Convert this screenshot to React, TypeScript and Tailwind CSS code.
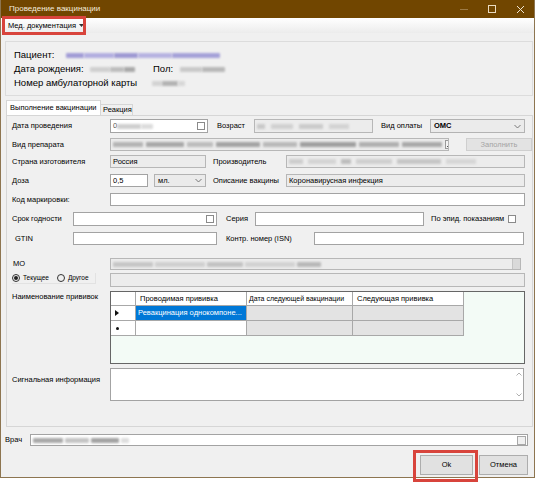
import React from "react";

const font = { fontFamily: '"Liberation Sans", Arial, "Noto Sans", sans-serif' };

const Chevron = () => (
  <svg width="7" height="5" viewBox="0 0 7 5" className="shrink-0">
    <polyline points="0.5,1 3.5,4 6.5,1" fill="none" stroke="#6b6b6b" strokeWidth="0.9" />
  </svg>
);

const Smudge = ({ className }: { className: string }) => (
  <div className={`h-[5px] rounded-[1px] blur-[1px] shrink-0 ${className}`} />
);

type BoxProps = {
  className: string;
  gray?: boolean;
  children?: React.ReactNode;
};

// текстовое поле WinForms
const Field = ({ className, gray, children }: BoxProps) => (
  <div
    className={`h-full border flex items-center px-[2px] overflow-hidden shrink-0 text-[7.5px] leading-none whitespace-nowrap ${
      gray ? "bg-[#ececec] border-[#b7b7b7]" : "bg-white border-[#a3a3a3]"
    } ${className}`}
  >
    {children}
  </div>
);

const Select = ({ className, children }: BoxProps) => (
  <div
    className={`h-full border border-[#b3b3b3] bg-[#ebebeb] flex items-center justify-between px-[3px] shrink-0 text-[7.5px] leading-none ${className}`}
  >
    <span>{children}</span>
    <Chevron />
  </div>
);

const Check = () => <div className="w-[8px] h-[8px] border border-[#8a8a8a] bg-white shrink-0" />;

const Dots = () => (
  <div className="ml-auto w-[9px] h-[9px] border border-[#9a9a9a] bg-[#f4f4f4] flex items-end justify-center gap-[1px] pb-[1px] shrink-0">
    <div className="w-[1px] h-[1px] bg-[#555]" />
    <div className="w-[1px] h-[1px] bg-[#555]" />
    <div className="w-[1px] h-[1px] bg-[#555]" />
  </div>
);

const Label = ({ className, children }: { className: string; children: React.ReactNode }) => (
  <div className={`shrink-0 text-[7.5px] leading-none whitespace-nowrap ${className}`}>{children}</div>
);

const App: React.FC = () => {
  return (
    <div className="relative w-[536px] h-[482px] bg-white overflow-hidden text-black" style={font}>
      <div className="w-[535px] h-[478px] border-x border-b border-[#8d7550] bg-[#f0f0f0] flex flex-col">
        {/* заголовок окна */}
        <div className="h-[18px] bg-[#714600] flex items-center pl-[8px] shrink-0">
          <span className="text-[8px] text-[#f4ecdd]">Проведение вакцинации</span>
          <div className="ml-auto flex h-full">
            <div className="w-[28px] h-full flex items-center justify-center">
              <div className="w-[8px] h-[1px] bg-[#9c7a45]" />
            </div>
            <div className="w-[28px] h-full flex items-center justify-center">
              <div className="w-[8px] h-[8px] border border-[#eadbc0]" />
            </div>
            <div className="w-[28px] h-full flex items-center justify-center">
              <svg width="9" height="9" viewBox="0 0 9 9">
                <path d="M1 1 L8 8 M8 1 L1 8" stroke="#f1e6d2" strokeWidth="1" />
              </svg>
            </div>
          </div>
        </div>

        {/* меню */}
        <div className="h-[15px] bg-linear-to-b from-white to-[#ececec] flex items-center pl-[7px] shrink-0">
          <span className="text-[7.5px]">Мед. документация</span>
          <svg width="5" height="3" viewBox="0 0 5 3" className="ml-[3px]">
            <polygon points="0,0 5,0 2.5,3" fill="#333" />
          </svg>
        </div>

        {/* пациент */}
        <div className="mt-[8px] ml-[4px] w-[528px] h-[55px] border border-[#dcdcdc] pl-[8px] pt-[6px] flex flex-col text-[9.5px] leading-none shrink-0">
          <div className="h-[14px] flex items-center">
            <span className="w-[52px] shrink-0">Пациент:</span>
            <div className="flex">
              <Smudge className="w-[18px] bg-[#a19cd6]" />
              <Smudge className="w-[30px] bg-[#b2aee0]" />
              <Smudge className="w-[24px] bg-[#9e99d3]" />
              <Smudge className="w-[34px] bg-[#b6b2e1]" />
              <Smudge className="w-[48px] bg-[#a5a1d8]" />
            </div>
          </div>
          <div className="h-[14px] flex items-center">
            <span className="w-[76px] shrink-0">Дата рождения:</span>
            <div className="flex w-[45px]">
              <Smudge className="w-[20px] bg-[#cfcfcf]" />
              <Smudge className="w-[14px] bg-[#bdbdbd]" />
              <Smudge className="w-[11px] bg-[#a9a9a9]" />
            </div>
            <span className="ml-[18px] w-[27px] shrink-0">Пол:</span>
            <div className="flex w-[45px]">
              <Smudge className="w-[22px] bg-[#c9c9c9]" />
              <Smudge className="w-[23px] bg-[#b8b8b8]" />
            </div>
          </div>
          <div className="h-[14px] flex items-center">
            <span className="w-[138px] shrink-0">Номер амбулаторной карты</span>
            <div className="flex">
              <Smudge className="w-[10px] bg-[#d3d3d3]" />
              <Smudge className="w-[16px] bg-[#b3b3b3]" />
              <Smudge className="w-[7px] bg-[#d7d7d7]" />
            </div>
          </div>
        </div>

        {/* вкладки */}
        <div className="mt-[4px] h-[15px] flex items-end pl-[5px] shrink-0">
          <div className="w-[95px] h-[15px] bg-white border border-b-0 border-[#d6d6d6] flex items-center pl-[3px] text-[7.5px] leading-none whitespace-nowrap">
            Выполнение вакцинации
          </div>
          <div className="w-[32px] h-[11px] bg-[#f0f0f0] border border-l-0 border-b-0 border-[#d6d6d6] flex items-center pl-[2px] text-[7.5px] leading-none">
            Реакция
          </div>
        </div>

        {/* панель вкладки */}
        <div className="ml-[5px] w-[527px] h-[312px] border border-[#d6d6d6] bg-[#f0f0f0] flex flex-col pl-[5px] shrink-0">
          {/* дата / возраст / оплата */}
          <div className="mt-[3px] h-[14px] flex items-center">
            <Label className="w-[98px]">Дата проведения</Label>
            <Field className="w-[98px] justify-between">
              <div className="flex items-center">
                <span className="text-[#555]">0</span>
                <Smudge className="w-[24px] bg-[#cfcfcf]" />
                <Smudge className="w-[12px] bg-[#dcdcdc]" />
              </div>
              <Check />
            </Field>
            <Label className="ml-[9px] w-[37px]">Возраст</Label>
            <Field gray className="w-[119px] gap-[6px]">
              <Smudge className="w-[8px] bg-[#c9c9c9]" />
              <Smudge className="w-[22px] bg-[#d0d0d0]" />
              <Smudge className="w-[24px] bg-[#cbcbcb]" />
              <Smudge className="w-[20px] bg-[#d3d3d3]" />
            </Field>
            <Label className="ml-[8px] w-[49px]">Вид оплаты</Label>
            <Select className="w-[95px] font-semibold">ОМС</Select>
          </div>

          {/* вид препарата */}
          <div className="mt-[5px] h-[13px] flex items-center">
            <Label className="w-[98px]">Вид препарата</Label>
            <Field gray className="w-[339px] gap-[3px] pr-0">
              <Smudge className="w-[30px] bg-[#b4b4b4]" />
              <Smudge className="w-[38px] bg-[#a8a8a8]" />
              <Smudge className="w-[26px] bg-[#bdbdbd]" />
              <Smudge className="w-[44px] bg-[#a4a4a4]" />
              <Smudge className="w-[34px] bg-[#b9b9b9]" />
              <Smudge className="w-[56px] bg-[#9f9f9f]" />
              <Smudge className="w-[40px] bg-[#b0b0b0]" />
              <Smudge className="w-[40px] bg-[#a9a9a9]" />
              <Dots />
            </Field>
            <div className="ml-[17px] w-[69px] h-full bg-[#e3e3e3] border border-[#cfcfcf] flex items-center justify-center text-[7.5px] leading-none text-[#a3a3a3]">
              Заполнить
            </div>
          </div>

          {/* страна / производитель */}
          <div className="mt-[4px] h-[13px] flex items-center">
            <Label className="w-[98px]">Страна изготовителя</Label>
            <Field gray className="w-[96px]">Россия</Field>
            <Label className="ml-[7px] w-[73px]">Производитель</Label>
            <Field gray className="w-[239px] gap-[5px]">
              <Smudge className="w-[14px] bg-[#cdcdcd]" />
              <Smudge className="w-[28px] bg-[#d4d4d4]" />
              <Smudge className="w-[10px] bg-[#bdbdbd]" />
              <Smudge className="w-[36px] bg-[#cfcfcf]" />
              <Smudge className="w-[44px] bg-[#c6c6c6]" />
              <Smudge className="w-[30px] bg-[#d6d6d6]" />
            </Field>
          </div>

          {/* доза / описание */}
          <div className="mt-[6px] h-[13px] flex items-center">
            <Label className="w-[98px]">Доза</Label>
            <Field className="w-[38px]">0,5</Field>
            <Select className="ml-[6px] w-[52px]">мл.</Select>
            <Label className="ml-[7px] w-[73px]">Описание вакцины</Label>
            <Field gray className="w-[239px]">Коронавирусная инфекция</Field>
          </div>

          {/* код маркировки */}
          <div className="mt-[6px] h-[13px] flex items-center">
            <Label className="w-[98px]">Код маркировки:</Label>
            <Field className="w-[415px]" />
          </div>

          {/* срок годности / серия */}
          <div className="mt-[6px] h-[14px] flex items-center">
            <Label className="w-[61px]">Срок годности</Label>
            <Field className="w-[144px] justify-end">
              <Check />
            </Field>
            <Label className="ml-[9px] w-[29px]">Серия</Label>
            <Field className="w-[169px]" />
            <Label className="ml-[7px] w-[77px]">По эпид. показаниям</Label>
            <Check />
          </div>

          {/* GTIN / ISN */}
          <div className="mt-[6px] h-[13px] flex items-center">
            <Label className="w-[61px] pl-[3px]">GTIN</Label>
            <Field className="w-[144px]" />
            <Label className="ml-[9px] w-[88px]">Контр. номер (ISN)</Label>
            <Field className="w-[210px]" />
          </div>

          {/* МО */}
          <div className="mt-[13px] h-[12px] flex items-center">
            <Label className="w-[98px] pl-[1px]">МО</Label>
            <Field gray className="w-[411px] gap-[2px] pr-0">
              <Smudge className="w-[40px] bg-[#c6c6c6]" />
              <Smudge className="w-[50px] bg-[#cfcfcf]" />
              <Smudge className="w-[36px] bg-[#c2c2c2]" />
              <Smudge className="w-[50px] bg-[#d2d2d2]" />
              <Smudge className="w-[24px] bg-[#b8b8b8]" />
              <div className="ml-auto w-[8px] h-full bg-[#d9d9d9] border-l border-[#c4c4c4]" />
            </Field>
          </div>
          <div className="mt-[3px] h-[14px] flex items-center">
            <div className="w-[98px] h-full flex items-start">
              <div className="w-[84px] h-[11px] border-r border-b border-[#e2e2e2] flex items-center text-[6.5px] leading-none">
                <div className="w-[8px] h-[8px] rounded-full border border-[#333] flex items-center justify-center shrink-0">
                  <div className="w-[4px] h-[4px] rounded-full bg-[#222]" />
                </div>
                <span className="ml-[3px]">Текущее</span>
                <div className="ml-[8px] w-[8px] h-[8px] rounded-full border border-[#333] shrink-0" />
                <span className="ml-[3px]">Другое</span>
              </div>
            </div>
            <Field gray className="w-[415px]" />
          </div>

          {/* таблица прививок */}
          <div className="mt-[4px] h-[73px] flex">
            <Label className="w-[98px] pt-[2px]">Наименование прививок</Label>
            <div className="w-[415px] h-full border border-[#666] bg-[#f3fbf6] shrink-0">
              <div className="flex flex-col w-[353px] text-[7.5px] leading-none">
                <div className="h-[14px] flex bg-white">
                  <div className="w-[25px] border-r border-b border-[#a8a8a8]" />
                  <div className="w-[111px] border-r border-b border-[#a8a8a8] flex items-center pl-[4px]">Проводимая прививка</div>
                  <div className="w-[106px] border-r border-b border-[#a8a8a8] flex items-center pl-[2px] whitespace-nowrap overflow-hidden text-[7px]">Дата следующей вакцинации</div>
                  <div className="w-[111px] border-r border-b border-[#a8a8a8] flex items-center pl-[4px]">Следующая прививка</div>
                </div>
                <div className="h-[15px] flex">
                  <div className="w-[25px] bg-white border-r border-b border-[#a8a8a8] flex items-center pl-[4px]">
                    <svg width="4" height="6" viewBox="0 0 4 6"><polygon points="0,0 4,3 0,6" fill="#111" /></svg>
                  </div>
                  <div className="w-[111px] bg-[#0078d7] text-white border-r border-b border-[#a8a8a8] flex items-center pl-[2px] whitespace-nowrap overflow-hidden">Ревакцинация однокомпоне...</div>
                  <div className="w-[106px] bg-[#e3e3e3] border-r border-b border-[#a8a8a8]" />
                  <div className="w-[111px] bg-[#e3e3e3] border-r border-b border-[#a8a8a8]" />
                </div>
                <div className="h-[15px] flex">
                  <div className="w-[25px] bg-white border-r border-b border-[#a8a8a8] flex items-center pl-[5px]">
                    <div className="w-[3px] h-[3px] rounded-full bg-[#111]" />
                  </div>
                  <div className="w-[111px] bg-white border-r border-b border-[#a8a8a8]" />
                  <div className="w-[106px] bg-[#e3e3e3] border-r border-b border-[#a8a8a8]" />
                  <div className="w-[111px] bg-[#e3e3e3] border-r border-b border-[#a8a8a8]" />
                </div>
              </div>
            </div>
          </div>

          {/* сигнальная информация */}
          <div className="mt-[4px] h-[33px] flex">
            <Label className="w-[98px] pt-[8px]">Сигнальная информация</Label>
            <div className="w-[414px] h-full bg-white border border-[#a3a3a3] flex justify-end shrink-0">
              <div className="w-[9px] h-full flex flex-col items-center justify-between py-[3px]">
                <svg width="6" height="4" viewBox="0 0 6 4"><polyline points="0.5,3.5 3,1 5.5,3.5" fill="none" stroke="#9a9a9a" strokeWidth="0.8" /></svg>
                <svg width="6" height="4" viewBox="0 0 6 4"><polyline points="0.5,0.5 3,3 5.5,0.5" fill="none" stroke="#9a9a9a" strokeWidth="0.8" /></svg>
              </div>
            </div>
          </div>
        </div>

        {/* врач */}
        <div className="mt-[7px] h-[12px] flex items-center ml-[4px] shrink-0">
          <Label className="w-[25px]">Врач</Label>
          <Field className="w-[498px] gap-[2px] pr-[1px]">
            <Smudge className="w-[30px] bg-[#a9a9a9]" />
            <Smudge className="w-[24px] bg-[#c4c4c4]" />
            <Smudge className="w-[28px] bg-[#a3a3a3]" />
            <Smudge className="w-[8px] bg-[#dedede]" />
            <div className="ml-auto w-[9px] h-[9px] border border-[#a8a8a8] bg-[#f0f0f0]" />
          </Field>
        </div>

        {/* кнопки */}
        <div className="mt-[9px] h-[20px] flex justify-end pr-[6px] shrink-0">
          <div className="w-[53px] h-full bg-[#e1e1e1] border border-[#adadad] flex items-center justify-center text-[7.5px] leading-none">Ok</div>
          <div className="ml-[6px] w-[49px] h-full bg-[#e1e1e1] border border-[#adadad] flex items-center justify-center text-[7.5px] leading-none">Отмена</div>
        </div>
      </div>

      {/* красные выделения поверх */}
      <div className="absolute left-[2px] top-[16px] w-[84px] h-[19px] border-[3px] border-[#d8443c]" />
      <div className="absolute left-[413px] top-[450px] w-[65px] h-[32px] border-[3px] border-[#d8443c]" />
    </div>
  );
};

export default App;
